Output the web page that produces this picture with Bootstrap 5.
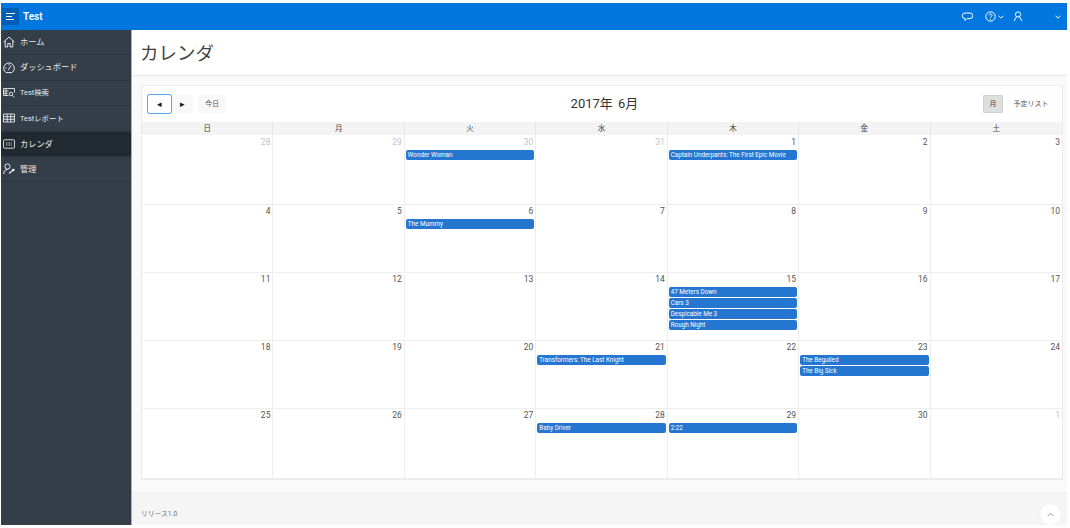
<!DOCTYPE html>
<html lang="ja">
<head>
<meta charset="utf-8">
<title>カレンダ</title>
<link href="https://cdn.jsdelivr.net/npm/bootstrap@5.3.0/dist/css/bootstrap.min.css" rel="stylesheet">
<style>
html,body{height:100%;margin:0;overflow:hidden;background:#fff}
body{font-family:Roboto,"Noto Sans CJK JP",sans-serif;font-size:9px;color:#404040}
.frame{height:522px;margin:3px 3px 0 1px;width:1066px}
.topbar{height:27px;background:#0076df;color:#fff;flex:none}
.burger{width:17px;height:17px;margin-left:1px;background:#005fb4}
.brand{font-size:10px;font-weight:600;margin-left:4px}
.gap-chat{margin-left:12px}
.gap-small{margin-left:2px}
.gap-user{margin-left:9px}
.gap-end{margin:0 6px 0 32px}
.side{width:130px;background:#343e48;color:#e6e9ec;flex:none}
.side-item{height:25.4px;padding-left:2px;border-bottom:1px solid #2c353e;font-size:8.2px;gap:5px;white-space:nowrap}
.side-item.on{background:#222a31}
.side-item svg{flex:none}
.side-latin{font-size:7.4px}
.main-col{background:#f5f5f5;min-width:0;border-left:1px solid #aab0b5}
.page-head{height:46px;background:#fff;border-bottom:1px solid #e8e8e8;padding:3px 0 0 8px;flex:none}
.page-head h1{font-size:18.5px;font-weight:400;margin:0;color:#444}
.body-wrap{background:#fafafa;height:417px;padding:9px 4px 0 9px;border-bottom:1px solid #efefef;flex:none}
.cal-box{background:#fff;border:1px solid #eaeaea;border-top-color:#f0f0f0;height:395px}
.cal-bar{height:36px;padding:0 8px 0 6px}
.cal-btn{height:18px;font-size:7px;line-height:18px;padding:0;border:0;border-radius:2px;background:#f8f8f8;color:#555;text-align:center}
.cal-btn.prev{width:23px;background:#fff;box-shadow:0 0 0 1px #5aa5ef;color:#111;font-size:9px}
.cal-btn.next{width:21px;margin-left:1px;color:#111;font-size:9px}
.cal-btn.today{width:28px;margin-left:5px}
.cal-btn.month{width:20px;background:#dedede;box-shadow:inset 0 0 0 1px #cfcfcf;color:#444}
.cal-btn.list{width:46px;margin-left:5px;background:#fff;box-shadow:0 0 2px #eee}
.cal-title{font-size:13px;color:#333;flex:1;text-align:center;word-spacing:2px}
.cal-grid{display:grid;grid-template-columns:repeat(7,1fr);grid-template-rows:13px 70px 68px 68px 68px 70px;height:357px}
.dow{background:#f3f3f3;text-align:center;font-size:7.5px;line-height:13px;border-right:1px solid #e4e4e4;color:#444}
.day{border-right:1px solid #eeeeee;border-bottom:1px solid #eeeeee;padding:0 1px;min-width:0;overflow:hidden}
.day:nth-child(-n+14){padding-top:1px}
.dow:nth-child(7n),.day:nth-child(7n){border-right:0}
.num{font-size:8.5px;text-align:right;line-height:13px;height:14px;padding-right:1px;color:#555}
.num.off{color:#c4c4c4}
.ev{background:#2476d0;color:#fff;font-size:6.3px;line-height:10px;height:10px;border-radius:2px;padding-left:2px;margin-bottom:1px;white-space:nowrap;overflow:hidden}
.foot{height:33px;padding:9px 6px 0 9px;color:#707070;font-size:6.8px;flex:none}
.up{width:21px;height:21px;border-radius:50%;background:#fff;box-shadow:0 0 1px #ddd}
</style>
</head>
<body>
<div class="frame d-flex flex-column">
  <header class="topbar d-flex align-items-center">
    <div class="burger d-flex align-items-center justify-content-center">
      <svg width="11" height="9" viewBox="0 0 11 9" fill="none" stroke="#fff" stroke-width="1.1"><path d="M1 1.5h9M1 4.5h6M1 7.5h8"/></svg>
    </div>
    <span class="brand">Test</span>
    <div class="ms-auto d-flex align-items-center">
      <svg width="11" height="10" viewBox="0 0 11 10" fill="none" stroke="#fff" stroke-width="1"><path d="M3 1h5a2.4 2.4 0 0 1 0 5.6H5L3 8.6V6.5a2.4 2.4 0 0 1 0-5.5z"/></svg>
      <svg class="gap-chat" width="11" height="11" viewBox="0 0 11 11" fill="none" stroke="#fff" stroke-width="1"><circle cx="5.5" cy="5.5" r="4.7"/><path d="M4 4.3a1.5 1.5 0 1 1 2.2 1.4c-.5.3-.7.5-.7 1M5.5 7.8v1"/></svg>
      <svg class="gap-small" width="6" height="4" viewBox="0 0 6 4" fill="none" stroke="#fff" stroke-width="1"><path d="M.5.7 3 3.2 5.5.7"/></svg>
      <svg class="gap-user" width="10" height="11" viewBox="0 0 10 11" fill="none" stroke="#fff" stroke-width="1"><circle cx="5" cy="3.5" r="2.6"/><path d="M3.6 5.6 1 10M6.4 5.6 9 10"/></svg>
      <svg class="gap-end" width="6" height="4" viewBox="0 0 6 4" fill="none" stroke="#fff" stroke-width="1"><path d="M.5.7 3 3.2 5.5.7"/></svg>
    </div>
  </header>
  <div class="d-flex flex-grow-1" style="min-height:0">
    <nav class="side">
      <div class="side-item d-flex align-items-center">
        <svg width="12" height="12" viewBox="0 0 12 12" fill="none" stroke="#e6e9ec" stroke-width="1"><path d="M.6 6 6 1l5.4 5M2.2 4.8V11h2.6V7.5h2.4V11h2.6V4.8"/></svg><span>ホーム</span></div>
      <div class="side-item d-flex align-items-center">
        <svg width="12" height="12" viewBox="0 0 12 12" fill="none" stroke="#e6e9ec" stroke-width="1"><path d="M3 10.6A5.3 5.3 0 1 1 9 10.6z"/><path d="M5 8.2 8.2 3.6M2.2 6H3.4M6 2.2v1.2"/></svg><span>ダッシュボード</span></div>
      <div class="side-item d-flex align-items-center">
        <svg width="12" height="11" viewBox="0 0 12 11" fill="none" stroke="#e6e9ec" stroke-width=".9"><path d="M.5 1.5h11v4M.5 1.5v7h5M.5 4h5M.5 6.3h4M3 1.5v7"/><circle cx="8" cy="7" r="1.8"/><path d="m9.3 8.3 2 2"/></svg><span class="side-latin">Test検索</span></div>
      <div class="side-item d-flex align-items-center">
        <svg width="12" height="10" viewBox="0 0 12 10" fill="none" stroke="#e6e9ec" stroke-width=".9"><path d="M.5 1h11v8H.5zM.5 3.7h11M.5 6.3h11M4.2 1v8M7.8 1v8"/></svg><span class="side-latin">Testレポート</span></div>
      <div class="side-item on d-flex align-items-center">
        <svg width="12" height="10" viewBox="0 0 12 10" fill="none" stroke="#e6e9ec" stroke-width=".9"><rect x=".5" y=".8" width="11" height="8.4" rx="1"/><path d="M3 4h6M3 6h6" stroke-dasharray="1 .6"/></svg><span>カレンダ</span></div>
      <div class="side-item d-flex align-items-center">
        <svg width="12" height="12" viewBox="0 0 12 12" fill="none" stroke="#e6e9ec" stroke-width="1"><circle cx="4.5" cy="3.5" r="2.6"/><path d="M.7 11c0-3 1.5-4.4 3.8-4.4"/><path d="M6 10.5 9.5 7.5M9 6.5l2 .3-.8 1.4" stroke-width="1.3"/></svg><span>管理</span></div>
    </nav>
    <main class="main-col flex-grow-1 d-flex flex-column">
      <div class="page-head d-flex align-items-center"><h1>カレンダ</h1></div>
      <div class="body-wrap">
        <section class="cal-box">
          <div class="cal-bar d-flex align-items-center">
            <button class="cal-btn prev">◂</button><button class="cal-btn next">▸</button><button class="cal-btn today">今日</button>
            <div class="cal-title">2017年 6月</div>
            <button class="cal-btn month">月</button><button class="cal-btn list">予定リスト</button>
          </div>
          <div class="cal-grid">
            <div class="dow">日</div><div class="dow">月</div><div class="dow">火</div><div class="dow">水</div><div class="dow">木</div><div class="dow">金</div><div class="dow">土</div>

            <div class="day"><div class="num off">28</div></div>
            <div class="day"><div class="num off">29</div></div>
            <div class="day"><div class="num off">30</div><div class="ev">Wonder Woman</div></div>
            <div class="day"><div class="num off">31</div></div>
            <div class="day"><div class="num">1</div><div class="ev">Captain Underpants: The First Epic Movie</div></div>
            <div class="day"><div class="num">2</div></div>
            <div class="day"><div class="num">3</div></div>

            <div class="day"><div class="num">4</div></div>
            <div class="day"><div class="num">5</div></div>
            <div class="day"><div class="num">6</div><div class="ev">The Mummy</div></div>
            <div class="day"><div class="num">7</div></div>
            <div class="day"><div class="num">8</div></div>
            <div class="day"><div class="num">9</div></div>
            <div class="day"><div class="num">10</div></div>

            <div class="day"><div class="num">11</div></div>
            <div class="day"><div class="num">12</div></div>
            <div class="day"><div class="num">13</div></div>
            <div class="day"><div class="num">14</div></div>
            <div class="day"><div class="num">15</div><div class="ev">47 Meters Down</div><div class="ev">Cars 3</div><div class="ev">Despicable Me 3</div><div class="ev">Rough Night</div></div>
            <div class="day"><div class="num">16</div></div>
            <div class="day"><div class="num">17</div></div>

            <div class="day"><div class="num">18</div></div>
            <div class="day"><div class="num">19</div></div>
            <div class="day"><div class="num">20</div></div>
            <div class="day"><div class="num">21</div><div class="ev">Transformers: The Last Knight</div></div>
            <div class="day"><div class="num">22</div></div>
            <div class="day"><div class="num">23</div><div class="ev">The Beguiled</div><div class="ev">The Big Sick</div></div>
            <div class="day"><div class="num">24</div></div>

            <div class="day"><div class="num">25</div></div>
            <div class="day"><div class="num">26</div></div>
            <div class="day"><div class="num">27</div></div>
            <div class="day"><div class="num">28</div><div class="ev">Baby Driver</div></div>
            <div class="day"><div class="num">29</div><div class="ev">2:22</div></div>
            <div class="day"><div class="num">30</div></div>
            <div class="day"><div class="num off">1</div></div>
          </div>
        </section>
      </div>
      <footer class="foot d-flex align-items-center justify-content-between">
        <span>リリース1.0</span>
        <div class="up d-flex align-items-center justify-content-center">
          <svg width="7" height="5" viewBox="0 0 7 5" fill="none" stroke="#999" stroke-width="1"><path d="M.7 4 3.5 1.2 6.3 4"/></svg>
        </div>
      </footer>
    </main>
  </div>
</div>
<script src="https://cdn.jsdelivr.net/npm/bootstrap@5.3.0/dist/js/bootstrap.bundle.min.js"></script>
</body>
</html>
